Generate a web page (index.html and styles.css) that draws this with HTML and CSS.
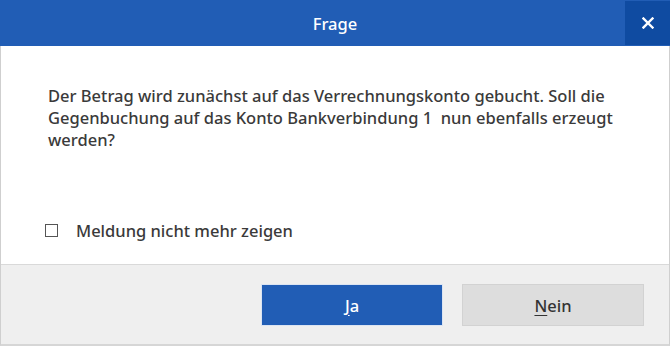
FILE: index.html
```html
<!DOCTYPE html>
<html lang="de">
<head>
  <meta charset="UTF-8">
  <title>Frage</title>
  <link rel="stylesheet" href="styles.css">
</head>
<body>
  <div class="dialog">
    <div class="title-bar">
      <span class="title">Frage</span>
      <button class="close-button" aria-label="Schließen">
        <svg width="12" height="12" viewBox="0 0 12 12"><path d="M1.5 1.5 L10.5 10.5 M10.5 1.5 L1.5 10.5" stroke="#fff" stroke-width="2.4" stroke-linecap="square"/></svg>
      </button>
    </div>

    <div class="frame">
      <div class="content">
        <p class="message">Der Betrag wird zunächst auf das Verrechnungskonto gebucht. Soll die Gegenbuchung auf das Konto Bankverbindung 1&nbsp; nun ebenfalls erzeugt werden?</p>

        <label class="check-row">
          <span class="check-box"></span>
          <span>Meldung nicht mehr zeigen</span>
        </label>
      </div>

      <div class="footer">
        <button class="btn btn-primary"><u>J</u>a</button>
        <button class="btn btn-secondary"><u>N</u>ein</button>
      </div>
    </div>
  </div>
</body>
</html>
```

FILE: styles.css
```css
body {
  margin: 0;
  font-family: 'Noto Sans', 'Open Sans', sans-serif;
  background: #fff;
}
.dialog {
  width: 670px;
  height: 346px;
  display: flex;
  flex-direction: column;
}
.title-bar {
  height: 46px;
  background: #215db5;
  display: flex;
  align-items: center;
  justify-content: center;
  position: relative;
}
.title {
  color: #fff;
  font-size: 16.5px;
  font-weight: 500;
}
.close-button {
  position: absolute;
  top: 1px;
  right: 0;
  width: 45px;
  height: 44px;
  border: none;
  background: #0f4ba1;
  display: flex;
  align-items: center;
  justify-content: center;
  padding: 0;
}
.frame {
  flex: 1;
  display: flex;
  flex-direction: column;
  border: 1px solid #cfcfcf;
  border-top: none;
  border-bottom: 2px solid #d6d6d6;
}
.content {
  flex: 1;
  padding: 39px 20px 0 47px;
}
.message {
  margin: 0;
  font-size: 16.5px;
  font-weight: 500;
  line-height: 22px;
  color: #3a3a3a;
}
.check-row {
  display: flex;
  align-items: center;
  gap: 18px;
  margin-top: 68px;
  margin-left: -3px;
  font-size: 16.5px;
  font-weight: 500;
  color: #3a3a3a;
}
.check-box {
  width: 11px;
  height: 11px;
  border: 1px solid #555;
}
.footer {
  height: 80px;
  box-sizing: border-box;
  background: #efefef;
  border-top: 1px solid #d9d9d9;
  display: flex;
  justify-content: flex-end;
  gap: 19px;
  padding: 19px 25px 0 0;
}
.btn {
  width: 182px;
  height: 42px;
  font-family: inherit;
  font-size: 16.5px;
  font-weight: 500;
  border-radius: 0;
  padding: 0;
}
.btn u {
  text-underline-offset: 3px;
}
.btn-primary {
  background: #215db5;
  color: #fff;
  border: 1px solid #dbe4f2;
}
.btn-secondary {
  background: #dddddd;
  color: #333;
  border: 1px solid #d2d2d2;
}
```
